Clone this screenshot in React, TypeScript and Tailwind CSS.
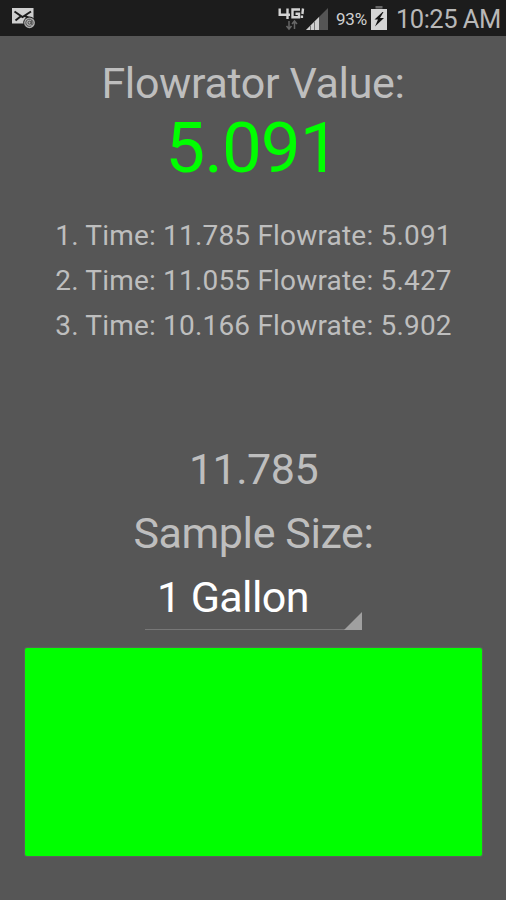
function MailIcon() {
  return (
    <svg className="ml-[10px] mt-[5px]" width="28" height="26" viewBox="10 5 28 26">
      <rect x="12" y="8" width="21.500" height="15.500" fill="#cfcfcf" />
      <path d="M14.500 11.500l8 5.500L31 11.500M15.500 20.500l5-4M25 16l4 2" stroke="#1c1c1c" strokeWidth="2" fill="none" />
      <circle cx="29.500" cy="22.800" r="6.200" fill="#1c1c1c" />
      <circle cx="29.500" cy="22.800" r="5.400" fill="#adadad" />
      <path d="M31.300 20.500v3.500c0 1.500 1.700 1 1.700-1.200a3.600 3.600 0 1 0-1.800 3.100" stroke="#444" strokeWidth="0.900" fill="none" />
      <circle cx="29.500" cy="22.700" r="1.500" stroke="#444" strokeWidth="0.900" fill="none" />
    </svg>
  );
}

function NetworkIcon() {
  return (
    <svg width="52" height="28" viewBox="277 4 52 28">
      <g fill="none" stroke="#d2d2d2" strokeWidth="2.400">
        <path d="M279.700 8.500v6.300H290M287.500 8.500v10.500" />
        <path d="M300 9.500h-7.500v7.800h6.500v-3.500h-3.500" />
        <path d="M303 8.500l-.6 5.500M301.900 15.500v2.400" />
      </g>
      <path d="M289 21v8m-2.500-3l2.500 3 2.500-3M294.500 29v-8m-2.500 3l2.500-3 2.500 3" fill="none" stroke="#666" strokeWidth="1.500" />
      <path d="M328 8v22h-22z" fill="#555" />
      <path d="M319 17v13h-13z" fill="#d0d0d0" />
      <path d="M310.500 25v5M314.500 21v9" stroke="#777" strokeWidth="1" />
    </svg>
  );
}

function BatteryIcon() {
  return (
    <svg width="16" height="25" viewBox="0 0 16 25">
      <path d="M4.500 0h7v2.500h-7z" fill="#666" />
      <path d="M0 3h16v21H0z" fill="#d5d5d5" />
      <path d="M11.500 6L3.500 13.500h3.500L4 20.500l9-8.500H9l3.500-6z" fill="#151515" />
    </svg>
  );
}

export default function App() {
  return (
    <div className="flex h-[900px] w-[506px] flex-col overflow-hidden bg-[#565656] font-[Roboto,sans-serif] text-[#bebebe]">
      <header className="flex h-9 shrink-0 items-start bg-[#1c1c1c] text-[#b8b8b8]">
        <MailIcon />
        <div className="ml-[239px] mt-1"><NetworkIcon /></div>
        <span className="ml-[7px] mt-[8px] w-[32px] whitespace-nowrap text-[17px] leading-[22px] tracking-[-0.2px] text-[#d0d0d0]">93%</span>
        <div className="ml-[3px] mt-[6px]"><BatteryIcon /></div>
        <span className="ml-[9px] mt-[4px] whitespace-nowrap text-[25.5px] leading-[30px] tracking-[-0.5px]">10:25 AM</span>
      </header>
      <main className="flex flex-col text-center">
        <h1 className="mt-[22px] text-[43px] leading-[50px] tracking-[-0.35px]">Flowrator Value:</h1>
        <div className="pr-[2px] text-[71px] leading-[80px] tracking-[-1px] text-[#0f0]">5.091</div>
        <ol className="mt-[25px] pl-px text-[28px] leading-[45px] tracking-[0.19px]">
          <li>1. Time: 11.785 Flowrate: 5.091</li>
          <li>2. Time: 11.055 Flowrate: 5.427</li>
          <li>3. Time: 10.166 Flowrate: 5.902</li>
        </ol>
        <div className="mt-[91px] pl-px text-[43px] leading-[60px] tracking-[-0.5px]">11.785</div>
        <div className="mt-[4px] pl-px text-[43px] leading-[60px] tracking-[-0.4px]">Sample Size:</div>
        <div className="ml-[145px] mt-[5px] flex h-[62px] w-[217px] items-end justify-between border-b border-[#777]">
          <span className="mb-[2px] ml-[12px] whitespace-nowrap text-[43px] leading-[60px] tracking-[-0.6px] text-white">1 Gallon</span>
          <svg className="-mb-px shrink-0" width="18" height="18" viewBox="0 0 18 18">
            <path d="M18 0v18H0z" fill="#a0a0a0" />
          </svg>
        </div>
        <button aria-label="Timer" className="ml-[25px] mt-[18px] h-[208px] w-[457px] rounded-[2px] bg-[#0f0] shadow-[0_0_1px_1px_#5b655b]" />
      </main>
    </div>
  );
}
